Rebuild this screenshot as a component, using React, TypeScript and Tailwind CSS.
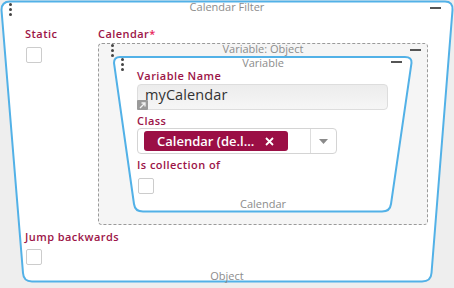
import type { ReactNode } from 'react'

const labelCls = "text-[11px] font-semibold leading-[14px] text-[#9c1447] tracking-[0.45px]"
const titleCls = "text-[11px] leading-[12px] text-[#8c8c8c] text-center"

function Dots({ className }: { className: string }) {
  return (
    <div className={`absolute flex flex-col gap-[2px] ${className}`}>
      <span className="w-[3px] h-[3px] rounded-full bg-[#444]" />
      <span className="w-[3px] h-[3px] rounded-full bg-[#444]" />
      <span className="w-[3px] h-[3px] rounded-full bg-[#444]" />
    </div>
  )
}

function Minus({ className }: { className: string }) {
  return <div className={`absolute w-[11px] h-[2px] bg-[#555] ${className}`} />
}

function Checkbox({ className = '' }: { className?: string }) {
  return <div className={`w-4 h-4 bg-white border border-[#cccccc] rounded-[2px] ${className}`} />
}

function Label({ children, className = '' }: { children: ReactNode; className?: string }) {
  return <div className={`${labelCls} ${className}`}>{children}</div>
}

function VariableBlock() {
  return (
    <div className="relative ml-[14px] mt-[1px] w-[300px] h-[157px]">
      <svg className="absolute left-0 top-0" width="300" height="157" viewBox="0 0 300 157">
        <path
          d="M1,7 Q1,1 7,1 L292,1 Q299,1 298.5,7 L278,148 Q277,155.5 269,155.5 L30,155.5 Q22,155.5 21,148 Z"
          fill="#ffffff"
          stroke="#52b1e7"
          strokeWidth="2"
        />
      </svg>
      <Dots className="left-[8px] top-[2px]" />
      <Minus className="left-[278px] top-[5px]" />
      <div className="relative flex flex-col pl-[24px]">
        <div className={`${titleCls} -ml-[24px] pt-[1px]`}>Variable</div>
        <Label>Variable Name</Label>
        <div className="relative mt-[1px] w-[251px] h-[26px] rounded-[4px] border border-[#dddddd] bg-gradient-to-b from-[#ececec] to-[#f6f6f6] flex items-center pl-[7px] pb-[3px]">
          <span className="text-[14.5px] text-[#333] leading-none tracking-[0.1px]">myCalendar</span>
          <div className="absolute left-[-1px] bottom-[-1px] w-[11px] h-[10px] bg-[#9a9a9a] rounded-[1px] flex items-center justify-center">
            <svg width="7" height="7" viewBox="0 0 7 7">
              <path d="M1,6 L6,1 M2.5,1 L6,1 L6,4.5" stroke="#f2f2f2" strokeWidth="1.3" fill="none" />
            </svg>
          </div>
        </div>
        <Label className="mt-[4px]">Class</Label>
        <div className="w-[200px] h-[26px] bg-white border border-[#d4d4d4] rounded-[4px] flex">
          <div className="flex-1 flex items-center pl-[6px]">
            <div className="w-[144px] h-[20px] bg-[#9b0f45] rounded-[3px] flex items-center pl-[13px] pr-[14px]">
              <span className="text-[13px] font-semibold text-white leading-none whitespace-nowrap">Calendar (de.l...</span>
              <svg className="ml-auto" width="9" height="9" viewBox="0 0 9 9">
                <path d="M1,1 L8,8 M8,1 L1,8" stroke="#ffffff" strokeWidth="1.8" />
              </svg>
            </div>
          </div>
          <div className="w-[26px] border-l border-[#dddddd] flex items-center justify-center">
            <svg width="9" height="5" viewBox="0 0 9 5">
              <path d="M0,0 L9,0 L4.5,5 Z" fill="#8a8a8a" />
            </svg>
          </div>
        </div>
        <Label className="mt-[4px]">Is collection of</Label>
        <Checkbox className="mt-[6px] ml-[1px]" />
        <div className={`${titleCls} -ml-[24px] mt-[4px]`}>Calendar</div>
      </div>
    </div>
  )
}

export default function App() {
  return (
    <div className="w-[454px] h-[288px] bg-[#eeeeee] relative overflow-hidden font-['Open_Sans',sans-serif]">
      <svg className="absolute left-0 top-0" width="454" height="288" viewBox="0 0 454 288">
        <path
          d="M1.5,10 Q1.5,1.5 10,1.5 L445,1.5 Q453,1.5 452.5,10 L431.5,273 Q431,281.5 422,281.5 L32,281.5 Q23.5,281.5 23,273 Z"
          fill="#ffffff"
          stroke="#52b1e7"
          strokeWidth="2"
        />
      </svg>
      <Dots className="left-[9px] top-[3px]" />
      <Minus className="left-[430px] top-[7px]" />

      <div className="relative flex flex-col h-full">
        <div className={`${titleCls} h-[15px] pt-[1px]`}>Calendar Filter</div>

        <div className="flex pl-[25px] mt-[12px]">
          <div className="w-[73px] flex flex-col">
            <Label>Static</Label>
            <Checkbox className="mt-[6px] ml-[1px]" />
          </div>
          <div className="w-[330px] flex flex-col">
            <Label>
              Calendar<span className="text-[#e8245c]">*</span>
            </Label>
            <div className="relative mt-[2px] h-[182px] rounded-[4px] border border-dashed border-[#9a9a9a] bg-[#f5f5f5]">
              <Dots className="left-[12px] top-[0px]" />
              <Minus className="left-[311px] top-[5px]" />
              <div className={`${titleCls} -mt-[1px] leading-[11px]`}>Variable: Object</div>
              <VariableBlock />
            </div>
          </div>
        </div>

        <Label className="pl-[25px] mt-[5px]">Jump backwards</Label>
        <Checkbox className="mt-[5px] ml-[26px]" />
        <div className={`${titleCls} mt-[5px]`}>Object</div>
      </div>
    </div>
  )
}
